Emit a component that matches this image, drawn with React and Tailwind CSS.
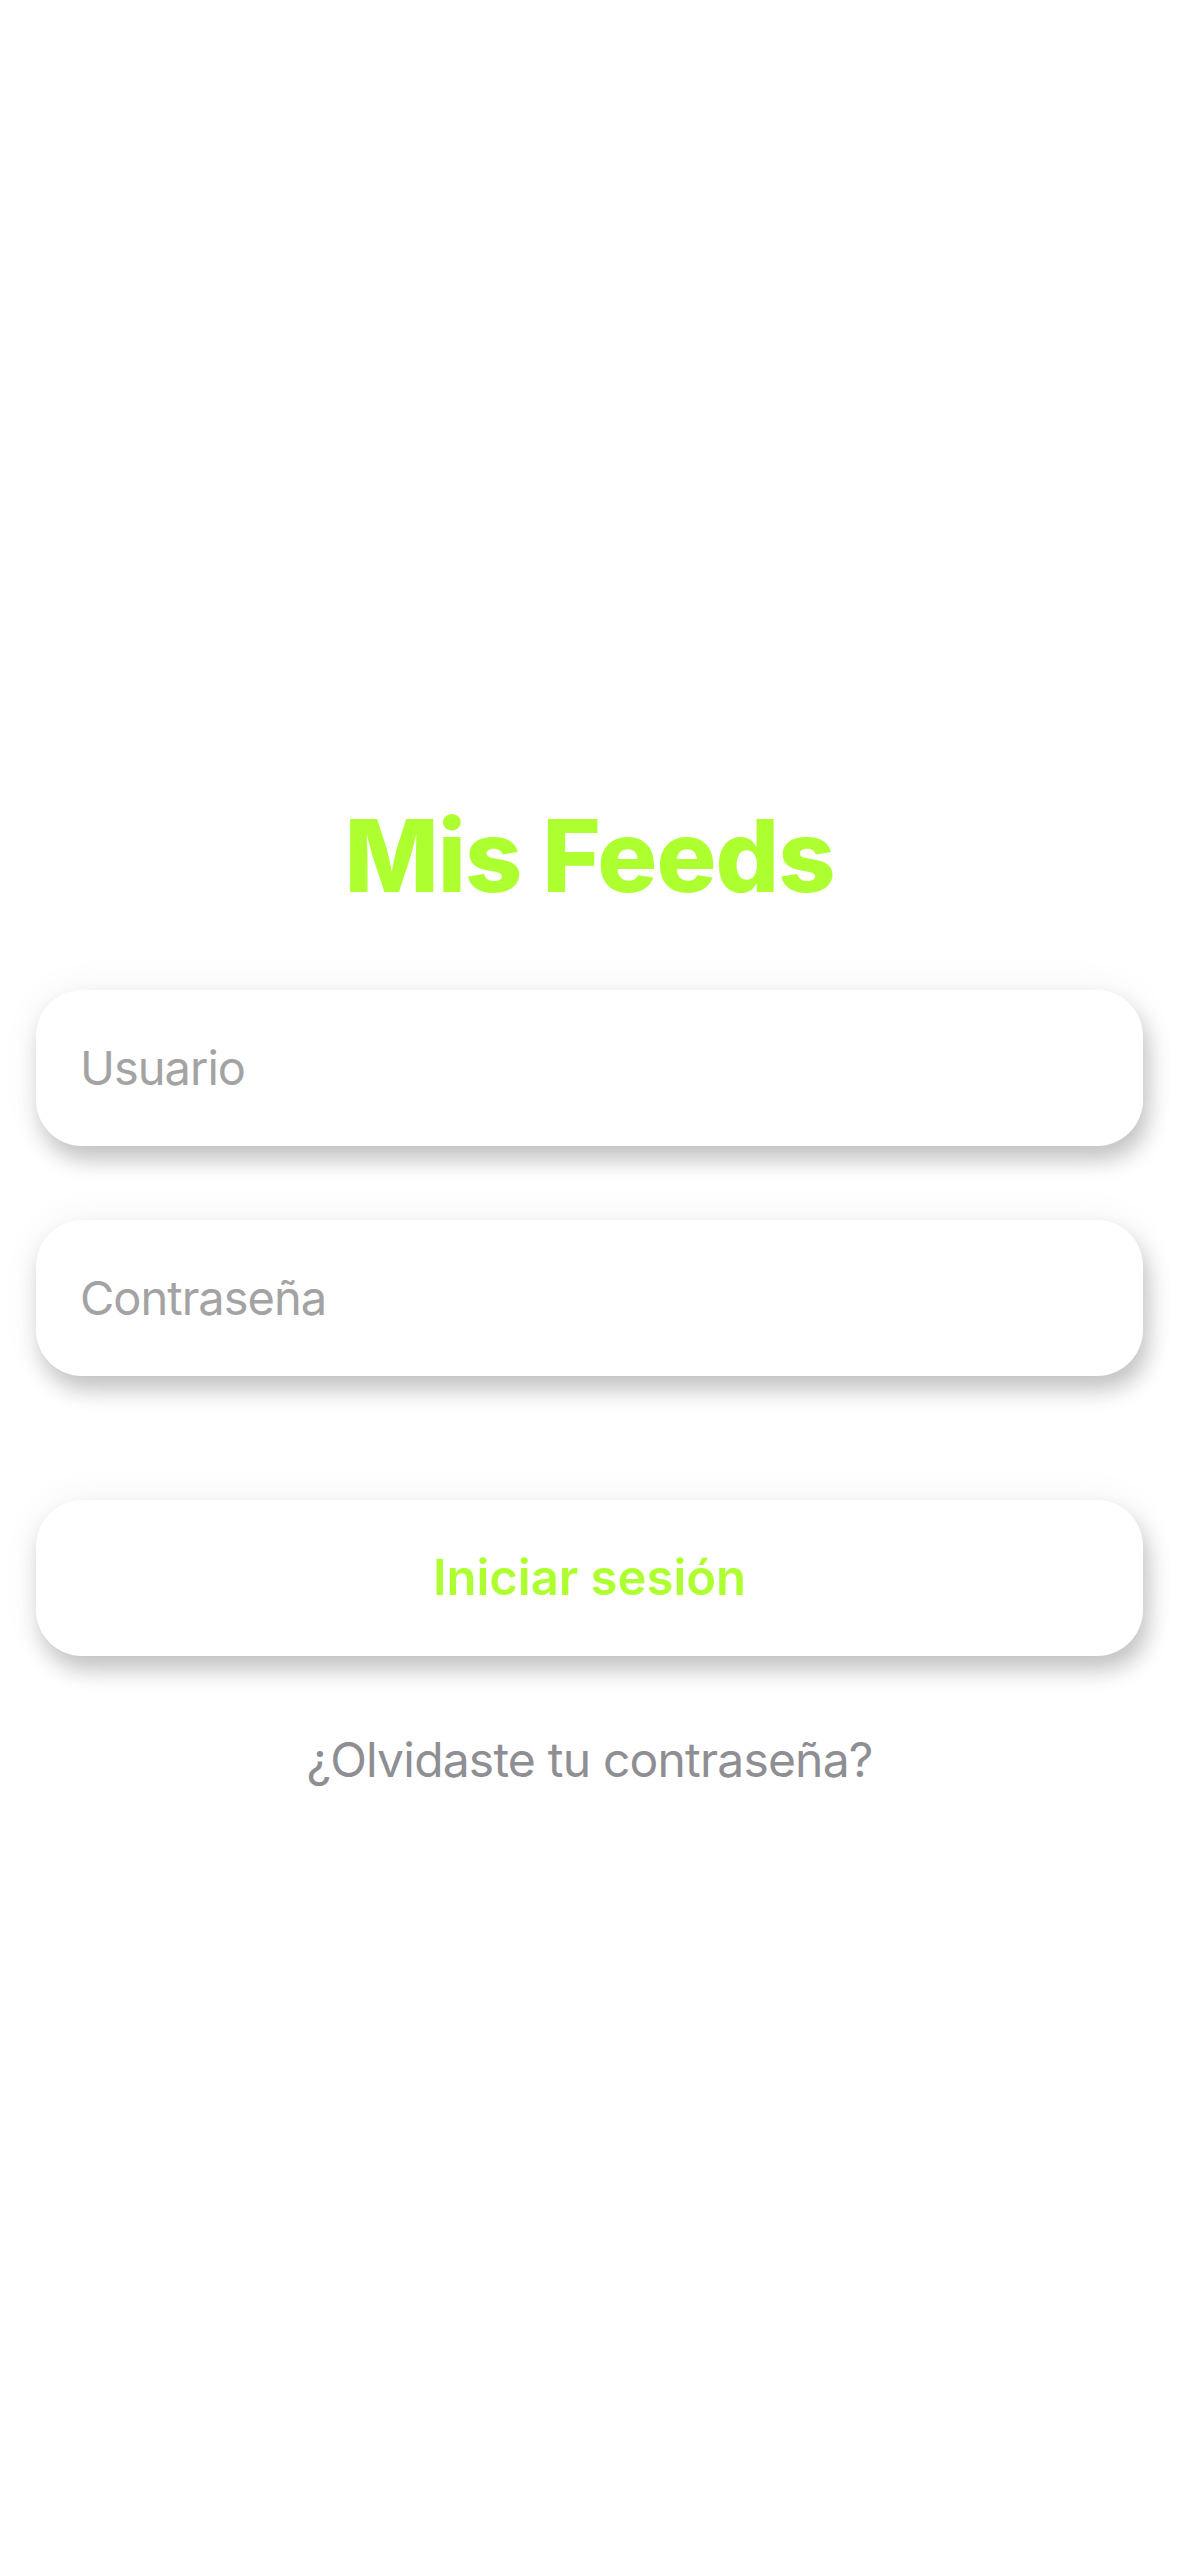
export default function App() {
  return (
    <div className="min-h-[2556px] w-full bg-white flex flex-col items-stretch px-[36px] pt-[806px] font-['Inter',sans-serif]">
      <h1 className="text-center text-[100px] leading-[100px] font-extrabold text-[#adff2f] tracking-[-1px]">
        Mis Feeds
      </h1>
      <div className="mt-[84px] h-[156px] rounded-[46px] bg-white flex items-center pl-[44px] shadow-[5px_14px_22px_rgba(0,0,0,0.22),0_0_40px_rgba(0,0,0,0.05)]">
        <input
          className="w-full bg-transparent outline-none text-[47px] tracking-[-1px] text-[#333] placeholder:text-[#a3a3a3]"
          placeholder="Usuario"
        />
      </div>
      <div className="mt-[74px] h-[156px] rounded-[46px] bg-white flex items-center pl-[44px] shadow-[5px_14px_22px_rgba(0,0,0,0.22),0_0_40px_rgba(0,0,0,0.05)]">
        <input
          type="password"
          className="w-full bg-transparent outline-none text-[47px] tracking-[-1px] text-[#333] placeholder:text-[#a3a3a3]"
          placeholder="Contraseña"
        />
      </div>
      <button className="mt-[124px] h-[156px] rounded-[46px] bg-white flex items-center justify-center shadow-[5px_14px_22px_rgba(0,0,0,0.22),0_0_40px_rgba(0,0,0,0.05)]">
        <span className="text-[49px] font-semibold text-[#adff2f]">Iniciar sesión</span>
      </button>
      <p className="mt-[74px] text-center text-[48px] leading-[60px] tracking-[-0.8px] text-[#8e8e93]">
        ¿Olvidaste tu contraseña?
      </p>
    </div>
  );
}
